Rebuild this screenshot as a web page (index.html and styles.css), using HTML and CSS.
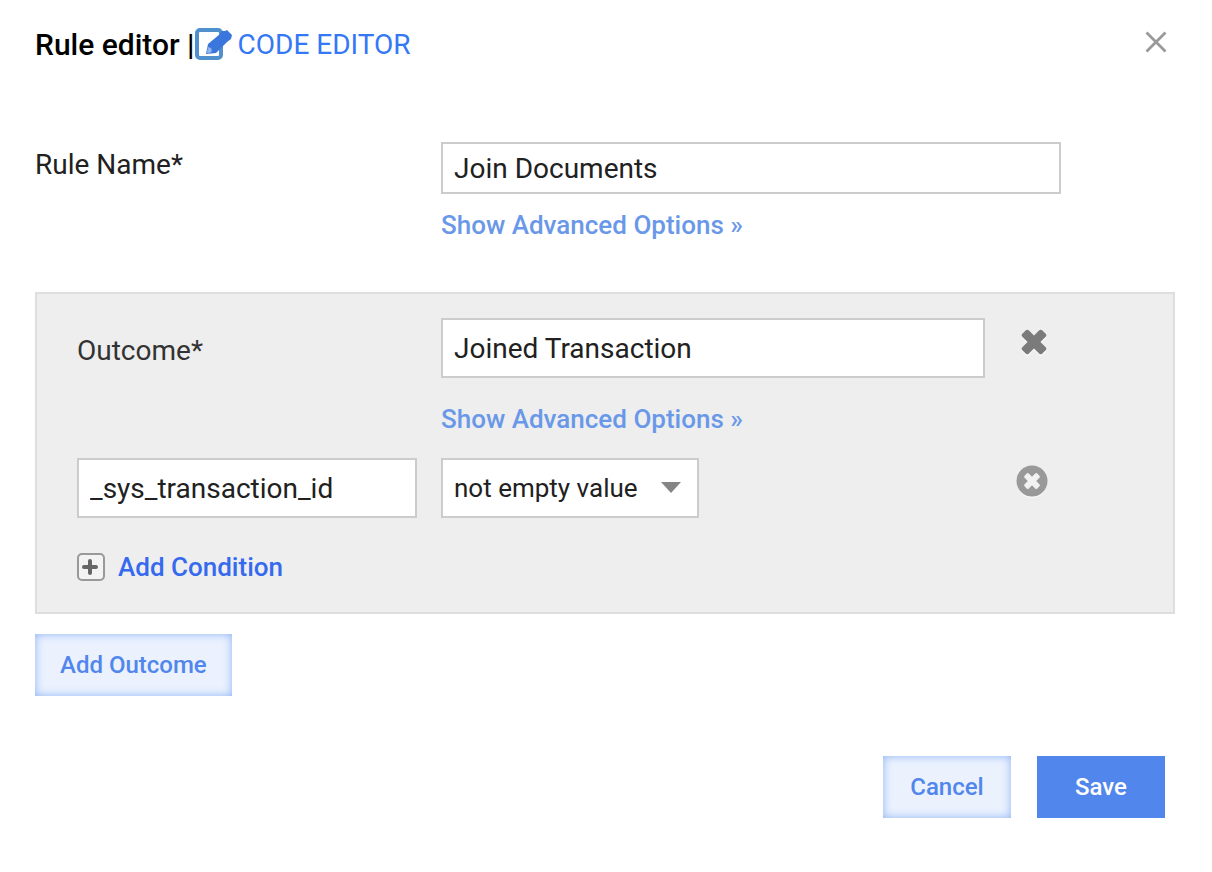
FILE: index.html
```html
<!DOCTYPE html>
<html lang="en">
<head>
  <meta charset="utf-8">
  <title>Rule editor</title>
  <link rel="stylesheet" href="styles.css">
</head>
<body>
  <form class="rule-editor">
    <header class="editor-header">
      <h1>Rule editor |</h1>
      <a class="code-link" href="#">
        <svg width="38" height="34" viewBox="0 0 38 34" aria-hidden="true">
          <rect x="2" y="3" width="24" height="28" rx="3" fill="#fff" stroke="#5090cc" stroke-width="4"/>
          <path d="M11 27l2-10L25 7l2-3 3 0 2-1 5 5-1 4-4 3-11 11z" fill="#3b76dc"/>
          <path d="M12 26l1-6 3 1 1 3-2 2z" fill="#8db4ec"/>
        </svg>
        <span>CODE EDITOR</span>
      </a>
      <button type="button" class="icon-button close" aria-label="Close">
        <svg width="22" height="22" viewBox="0 0 22 22">
          <path d="M1.5 1.5l19 19M20.5 1.5l-19 19" stroke="#999" stroke-width="2.8"/>
        </svg>
      </button>
    </header>

    <div class="rule-name">
      <label for="rule-name">Rule Name*</label>
      <div class="field">
        <input type="text" id="rule-name" value="Join Documents">
        <a class="advanced" href="#">Show Advanced Options »</a>
      </div>
    </div>

    <section class="outcome">
      <div class="row">
        <label for="outcome">Outcome*</label>
        <input type="text" id="outcome" value="Joined Transaction">
        <button type="button" class="icon-button" aria-label="Remove outcome">
          <svg width="30" height="28" viewBox="0 0 30 28">
            <g fill="#fafafa">
              <rect x="3" y="11" width="28" height="9" rx="2" transform="rotate(45 17 15.5)"/>
              <rect x="3" y="11" width="28" height="9" rx="2" transform="rotate(-45 17 15.5)"/>
            </g>
            <g fill="#7b7b7b">
              <rect x="3" y="9.5" width="28" height="9" rx="2" transform="rotate(45 17 14)"/>
              <rect x="3" y="9.5" width="28" height="9" rx="2" transform="rotate(-45 17 14)"/>
            </g>
          </svg>
        </button>
      </div>

      <a class="advanced" href="#">Show Advanced Options »</a>

      <div class="row">
        <input type="text" aria-label="Condition field" value="_sys_transaction_id">
        <div class="select-wrap">
          <select aria-label="Condition operator">
            <option>not empty value</option>
            <option>empty value</option>
          </select>
          <svg class="arrow" width="20" height="11" viewBox="0 0 20 11" aria-hidden="true">
            <path d="M0 0h20L10 11z" fill="#858585"/>
          </svg>
        </div>
        <button type="button" class="icon-button" aria-label="Remove condition">
          <svg width="32" height="34" viewBox="0 0 32 34">
            <circle cx="16" cy="18" r="15" fill="#fafafa"/>
            <circle cx="16" cy="16" r="15.5" fill="#999"/>
            <g fill="#f2f2f2">
              <rect x="7" y="13" width="18" height="6" rx="1.5" transform="rotate(45 16 16)"/>
              <rect x="7" y="13" width="18" height="6" rx="1.5" transform="rotate(-45 16 16)"/>
            </g>
          </svg>
        </button>
      </div>

      <button type="button" class="add-condition">
        <svg width="28" height="28" viewBox="0 0 28 28" aria-hidden="true">
          <rect x="1" y="1" width="26" height="26" rx="4" fill="#f3f3f3" stroke="#999" stroke-width="2"/>
          <path d="M13 8v12M7 14h12" stroke="#666" stroke-width="4" stroke-linecap="round"/>
        </svg>
        <span>Add Condition</span>
      </button>
    </section>

    <button type="button" class="button">Add Outcome</button>

    <footer class="actions">
      <button type="button" class="button">Cancel</button>
      <button type="submit" class="button primary">Save</button>
    </footer>
  </form>
</body>
</html>
```
FILE: styles.css
```css
* {
  box-sizing: border-box;
}

body {
  margin: 0;
  background-color: #fff;
  font-family: Roboto, sans-serif;
  font-size: 28px;
  color: #212121;
}

a {
  text-decoration: none;
}

button,
input,
select {
  font-family: inherit;
}

.rule-editor {
  padding: 26px 37px 54px 35px;
}

.editor-header {
  display: flex;
  align-items: center;
  height: 36px;
  margin-bottom: 80px;
}

.editor-header h1 {
  margin: 0;
  font-size: 30px;
  font-weight: 500;
  color: #000;
}

.code-link {
  display: flex;
  align-items: center;
  gap: 5px;
  color: #3478f6;
}

.icon-button {
  display: flex;
  align-items: center;
  justify-content: center;
  width: 46px;
  height: 48px;
  padding: 0;
  border: none;
  background: none;
  cursor: pointer;
}

.close {
  align-self: flex-start;
  width: 38px;
  height: 32px;
  margin-left: auto;
}

input,
select {
  width: 100%;
  height: 60px;
  padding: 0 11px;
  border: 2px solid #ccc;
  border-radius: 0;
  background-color: #fff;
  font-size: 28px;
  color: #212121;
}

.rule-name {
  display: grid;
  grid-template-columns: 406px 1fr;
  padding-right: 114px;
  margin-bottom: 50px;
}

.rule-name label {
  line-height: 46px;
}

.rule-name input {
  height: 52px;
}

.field {
  display: flex;
  flex-direction: column;
  align-items: flex-start;
  gap: 14px;
}

.advanced {
  font-size: 26px;
  font-weight: 500;
  line-height: 34px;
  color: #6a98e8;
}

.outcome {
  padding: 24px 118px 30px 40px;
  margin-bottom: 20px;
  border: 2px solid #dedede;
  background-color: #eee;
}

.row {
  display: grid;
  grid-template-columns: 340px 1fr 46px;
  column-gap: 24px;
}

.row label {
  line-height: 66px;
  color: #333;
}

.outcome .advanced {
  display: block;
  margin: 18px 0 22px 364px;
}

.select-wrap {
  position: relative;
  width: 258px;
}

select {
  appearance: none;
  font-size: 26px;
}

.arrow {
  position: absolute;
  top: 24px;
  right: 18px;
  pointer-events: none;
}

.add-condition {
  display: flex;
  align-items: center;
  gap: 13px;
  margin-top: 34px;
  padding: 0;
  border: none;
  background: none;
  font-size: 26px;
  font-weight: 500;
  color: #356aee;
  cursor: pointer;
}

.button {
  min-width: 128px;
  height: 62px;
  padding: 0 25px;
  border: none;
  background-color: #ebf2fe;
  box-shadow: inset 0 0 10px #8fb3f5;
  font-size: 24px;
  font-weight: 500;
  color: #5186ec;
  cursor: pointer;
}

.primary {
  background-color: #5186ec;
  box-shadow: none;
  color: #fff;
}

.actions {
  display: flex;
  justify-content: flex-end;
  gap: 26px;
  margin-top: 60px;
  padding-right: 10px;
}
```
